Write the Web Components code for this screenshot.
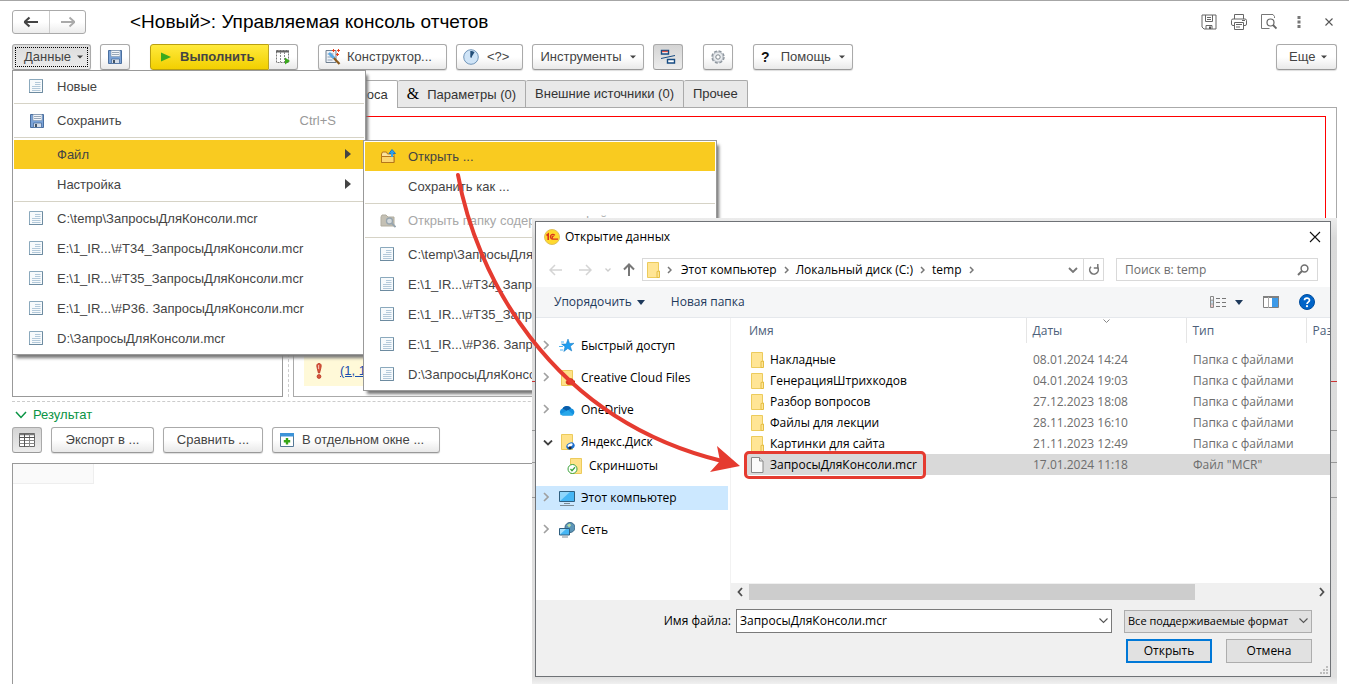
<!DOCTYPE html>
<html lang="ru">
<head>
<meta charset="utf-8">
<title>Управляемая консоль отчетов</title>
<style>
  body { margin: 0; background: #fff; font: 13px/16px "Liberation Sans", Arial, sans-serif; color: #444; }
</style>
</head>
<body>
<report-console></report-console>
<script>
const ICONS = {
  back: [16, 16, '<path d="M1 8h14M1.500 8l5-4.500M1.500 8l5 4.500" fill="none" stroke="#444" stroke-width="2.200"/>'],
  forward: [16, 16, '<path d="M1 8h14M14.500 8l-5-4.500M14.500 8l-5 4.500" fill="none" stroke="#aaa" stroke-width="1.800"/>'],
  save: [16, 16, '<path d="M1.500 1.500h13v13h-13z" fill="#7ba3d8" stroke="#4a6f9f"/><path d="M4 1.500h9v6H4z" fill="#f3f6fa" stroke="#7f93ab" stroke-width=".6"/><path d="M5 3.500h7M5 5.500h7" stroke="#9aa8b8"/><path d="M4.500 10h8v4.500h-8z" fill="#d5deea" stroke="#4a6f9f" stroke-width=".8"/><path d="M6 11h2v3H6z" fill="#456"/>'],
  play: [10, 10, '<path d="M0 0.500L10 5 0 9.500z" fill="#3aaa1d"/>'],
  tableRun: [16, 16, '<path d="M1.500 1.500h12v12h-12z" fill="#fff" stroke="#777" stroke-dasharray="2 1"/><path d="M1 2.500h13" stroke="#666" stroke-width="2"/><path d="M5.500 3v10M9.500 3v10" stroke="#888" stroke-dasharray="2 1"/><path d="M10 8.500l5 3.500-5 3.500z" fill="#3aaa1d"/>'],
  wand: [16, 16, '<path d="M1 1.500h10v12H1z" fill="#eef2f7" stroke="#6f7f90"/><path d="M2.500 5h6M2.500 8h5M2.500 11h5" stroke="#8fa0b4"/><path d="M5 5l9.500 10" stroke="#8a5a1c" stroke-width="2.200"/><path d="M4 4l5 5" stroke="#58a9e8" stroke-width="2.600"/><path d="M7 1.500h3M8.500 0v3M12 1.500h3M13.500 0v3M11 5.500h3M12.500 4v3" stroke="#e8401c"/>'],
  clock: [16, 16, '<circle cx="8" cy="8" r="7.300" fill="#cfe4f7" stroke="#7195b8"/><path d="M8 9V2a6 6 0 0 1 3.500 1.200z" fill="#234e78"/><path d="M8 8.500V2" stroke="#234e78" stroke-width="1.400"/>'],
  blocks: [16, 16, '<path d="M1.500 1.500h7v3.500h-7z" fill="#fff" stroke="#164b82" stroke-width="1.400"/><path d="M2 2.500h6" stroke="#d9534a" stroke-width="1.400"/><path d="M7.500 10.500h7v3.500h-7z" fill="#fff" stroke="#164b82" stroke-width="1.400"/><path d="M1 9.500l14-3" stroke="#164b82"/>'],
  gear: [16, 16, '<circle cx="8" cy="8" r="6" fill="#e3e7eb" stroke="#8d959d" stroke-width="1.400" stroke-dasharray="3 1.700"/><circle cx="8" cy="8" r="5" fill="#e9ecef" stroke="#a3aab1" stroke-width=".8"/><circle cx="8" cy="8" r="2.200" fill="#fff" stroke="#7e868d"/>'],
  caret: [6, 4, '<path d="M0 .5h6L3 3.500z" fill="#444"/>'],
  caretBlue: [8, 5, '<path d="M0 0h8L4 5z" fill="#1e395b"/>'],
  sub: [6, 10, '<path d="M0 0l6 5-6 5z" fill="#444"/>'],
  diskLine: [16, 16, '<path d="M1 1h14v14H3l-2-2z" fill="none" stroke="#666"/><path d="M4.500 1v6.500h7V1M6 3.500h4M6 5.500h4M5 15v-3.500h6V15" fill="none" stroke="#666"/><path d="M8 12.500h2V15H8z" fill="#555"/>'],
  printer: [16, 16, '<path d="M3.500 5V.5h9V5M3.500 11.500H2A1.500 1.500 0 0 1 .5 10V6.500A1.500 1.500 0 0 1 2 5h12a1.500 1.500 0 0 1 1.500 1.500V10a1.500 1.500 0 0 1-1.500 1.500h-1.500M3.500 8.500h9v7h-9zM5 10.500h6M5 13h4" fill="none" stroke="#666"/><path d="M11 6.500h3" stroke="#666"/>'],
  preview: [16, 16, '<path d="M13.500 4V2.500L12 .5H.5v14h8" fill="none" stroke="#777"/><circle cx="9.500" cy="8.500" r="3.500" fill="none" stroke="#666" stroke-width="1.200"/><path d="M12 11l3.500 3.500" stroke="#666" stroke-width="1.800"/>'],
  dots: [4, 12, '<path d="M.5 0h3v3h-3zM.5 4.500h3v3h-3zM.5 9h3v3h-3z" fill="#777"/>'],
  cross: [8, 8, '<path d="M.5.5l7 7M7.500.5l-7 7" stroke="#555" stroke-width="1.100"/>'],
  doc: [14, 15, '<path d="M.5.500h13v13H.5z" fill="#f7fafc" stroke="#8ba9bd"/><path d="M13.500.5v13H0" fill="none" stroke="#6d8ba0"/><path d="M6 3.500h5.500M6 5.500h5.500M3 7.500h8.500M3 9.500h8.500M3 11.500h8.500" stroke="#b3c9da"/>'],
  openFolder: [16, 15, '<path d="M1.500 5l1-2h4l1 2h6.500v8.500h-12.500z" fill="#fbe29a" stroke="#b5761a"/><path d="M1.500 7.500h12.500v6h-12.500z" fill="#fcd670" stroke="#b5761a"/><path d="M12 8V3.500M9 4.500L12 .5l3.500 4z" fill="#32a4ee" stroke="#1a78c0"/><path d="M12 8V4" stroke="#32a4ee" stroke-width="2"/>'],
  findFolder: [16, 15, '<path d="M1 4l1-2h4l2 2h6v9H1z" fill="#c4c0b4" stroke="#b1ad9f"/><circle cx="9.500" cy="8" r="3" fill="#d4d9dc" stroke="#98a5ae" stroke-width="1.300"/><path d="M12 10.500l3.500 3.500" stroke="#98a5ae" stroke-width="1.800"/>'],
  warn: [6, 16, '<path d="M3 .5c2 0 2.600 1.500 2 4L3.600 10H2.400L1 4.500C.4 2 1 .5 3 .5z" fill="#d9573f" stroke="#b83420" stroke-width=".8"/><path d="M2.600 2v4" stroke="#f8c4b8"/><circle cx="3" cy="13.500" r="1.900" fill="#d9573f" stroke="#b83420" stroke-width=".8"/>'],
  expand: [12, 8, '<path d="M1 1l5 5.500L11 1" fill="none" stroke="#0a9444" stroke-width="1.500"/>'],
  grid: [16, 14, '<path d="M.5.500h15v13H.5z" fill="#fff" stroke="#666"/><path d="M0 1.500h16" stroke="#777" stroke-width="1.500"/><path d="M5.500 1v13M10.500 1v13M.5 4.500h15M.5 7.500h15M.5 10.500h15" stroke="#888"/><path d="M5.500 1v13M0 4.500h16" stroke="#555"/>'],
  newWin: [14, 14, '<path d="M.5.500h13v13H.5z" fill="#fff" stroke="#557996"/><path d="M0 0h14v3.500H0z" fill="#3c93d8"/><path d="M5.800 5h2.400v2h2v2.400h-2v2H5.800v-2h-2V7h2z" fill="#36a616"/>'],
  logo: [16, 16, '<circle cx="8" cy="8" r="7.500" fill="#ffd92e" stroke="#dfc05a"/><path d="M2.500 6.500L4.200 5.200V11" fill="none" stroke="#d9341c" stroke-width="1.600"/><path d="M10.800 6.400A2.400 2.400 0 1 0 9 10.200h5M9.600 7.600A.8.800 0 1 0 9 8.800" fill="none" stroke="#d9341c" stroke-width="1.300"/>'],
  close: [12, 12, '<path d="M1 1l10 10M11 1L1 11" stroke="#111" stroke-width="1.100"/>'],
  wBack: [14, 12, '<path d="M1 6h12M6 1L1 6l5 5" fill="none" stroke="#d4d4d4" stroke-width="1.500"/>'],
  wForward: [14, 12, '<path d="M1 6h12M8 1l5 5-5 5" fill="none" stroke="#d4d4d4" stroke-width="1.500"/>'],
  wDown: [6, 4, '<path d="M.5.5L3 3 5.500.5" fill="none" stroke="#ccc" stroke-width="1.300"/>'],
  wUp: [12, 13, '<path d="M6 13V1.500M1 6.500l5-5 5 5" fill="none" stroke="#777" stroke-width="2"/>'],
  chevR: [5, 8, '<path d="M1 1l3 3-3 3" fill="none" stroke="#777" stroke-width="1.500"/>'],
  chevD: [10, 6, '<path d="M1 1l4 4 4-4" fill="none" stroke="#777" stroke-width="1.800"/>'],
  chevThin: [9, 6, '<path d="M.5.5l4 4 4-4" fill="none" stroke="#555" stroke-width="1.100"/>'],
  sortMark: [7, 4, '<path d="M.5.5l3 3 3-3" fill="none" stroke="#888"/>'],
  treeR: [6, 10, '<path d="M1 1l4 4-4 4" fill="none" stroke="#a0a0a0" stroke-width="1.600"/>'],
  treeD: [10, 6, '<path d="M1 .5l4 4 4-4" fill="none" stroke="#404040" stroke-width="1.800"/>'],
  barL: [6, 10, '<path d="M5 1L1.500 5 5 9" fill="none" stroke="#505050" stroke-width="1.800"/>'],
  barR: [6, 10, '<path d="M1 1l3.500 4L1 9" fill="none" stroke="#505050" stroke-width="1.800"/>'],
  refresh: [12, 12, '<path d="M3 2.700A4.300 4.300 0 1 0 9.500 3.300" fill="none" stroke="#777" stroke-width="1.600"/><path d="M9.800 0v4H5.800" stroke="#777" stroke-width="1.500" fill="none"/>'],
  loupe: [12, 12, '<circle cx="7.500" cy="4.500" r="3.400" fill="none" stroke="#707070" stroke-width="1.500"/><path d="M5 7L1 11" stroke="#707070" stroke-width="2"/>'],
  views: [16, 12, '<path d="M.5.5h3v11h-3zM0 4.200h4M0 8h4" fill="none" stroke="#888"/><path d="M1.500 6h1" stroke="#38c"/><path d="M1.500 10h1" stroke="#c33"/><path d="M6 2.500h4M12 2.500h4M6 6.500h4M12 6.500h4M6 10.500h4M12 10.500h4" stroke="#777"/>'],
  pane: [16, 12, '<path d="M.5.500h15v11H.5z" fill="#fff" stroke="#808080"/><path d="M0 1h16" stroke="#808080" stroke-width="2"/><path d="M5.500 1v11" stroke="#aaa"/><path d="M9 2h6v9H9z" fill="#3d9ae8"/>'],
  folder: [13, 16, '<path d="M.5.500h11v15H.5z" fill="#ffe595" stroke="#eccb5c"/><path d="M12.500 9v6.500H10V9.500z" fill="#ffe595" stroke="#e4be45"/>'],
  file: [13, 16, '<path d="M.5.500h8l3.500 3.500v11.500H.5z" fill="#fafafa" stroke="#888"/><path d="M8.500.5V4H12" fill="#ddd" stroke="#888"/>'],
  star: [16, 14, '<path d="M9 0l1.600 4.500 4.400-.2-3.600 3 1.400 4.700-4-2.500-4 3 1.200-4.800L2.500 5h4.700z" fill="#1f9df0" stroke="#1374bd" stroke-width=".5"/><path d="M2 3h3M0 7.500h4M1 11h3" stroke="#4fb3f2"/>'],
  creative: [16, 16, '<path d="M2.500.5h11v15h-11z" fill="#ffe28a" stroke="#eccb5c"/><path d="M8 14a2.200 2.200 0 0 1 1-4 3 3 0 0 1 5.500.5 2 2 0 0 1-.5 4H9z" fill="#e0301e" stroke="#b71d10" stroke-width=".5"/><path d="M9 12c1.500-2 3 2 4.500 0" fill="none" stroke="#fff"/>'],
  cloud: [16, 11, '<path d="M4 10.500A3.600 3.600 0 0 1 3.500 3.500 5 5 0 0 1 12 3.200 4 4 0 0 1 13.500 10.500z" fill="#1490df"/><path d="M3.500 3.500A5 5 0 0 1 12 3.200L8 6z" fill="#0a5ca8"/><path d="M1 9.500L9 5l5.500 4.800-1 .7H4z" fill="#28a8ea"/>'],
  yadisk: [16, 16, '<path d="M2.500.5h11v15h-11z" fill="#ffe28a" stroke="#eccb5c"/><ellipse cx="11.500" cy="12" rx="4.300" ry="3.300" fill="#1b6fd0" transform="rotate(-25 11.500 12)"/><ellipse cx="11" cy="11.200" rx="2.800" ry="1.500" fill="#fff" transform="rotate(-25 11 11)"/><circle cx="11" cy="13.700" r="1.500" fill="#222"/>'],
  shots: [16, 16, '<path d="M3.500.5h11v15h-11z" fill="#ffe28a" stroke="#eccb5c"/><circle cx="5.500" cy="11" r="4.500" fill="#fff" stroke="#3ba33b"/><path d="M3.500 11l1.500 1.700L8 9.300" fill="none" stroke="#3ba33b" stroke-width="1.300"/>'],
  computer: [16, 15, '<path d="M.5.500h15v10H.5z" fill="#45b6f5" stroke="#2f5f80"/><path d="M1 10V1h10z" fill="#8fd6fc"/><path d="M5 12.500h6M1 14.500h14" stroke="#7c8a94"/>'],
  network: [16, 16, '<circle cx="11" cy="5.500" r="5" fill="#5b95b7" stroke="#3d6a87"/><path d="M8 3l3-1.500 1 2-2 2z" fill="#b7dfa7"/><path d="M.5 6.500h10v6.500H.5z" fill="#45b6f5" stroke="#2f5f80"/><path d="M1 12.500v-5.500h6z" fill="#a5e0fd"/><path d="M3 15h6" stroke="#7c8a94"/>'],
  help: [16, 16, '<circle cx="8" cy="8" r="7.500" fill="#0064c8" stroke="#004d9d"/><path d="M5.500 6.300C5.500 3.300 10.500 3.300 10.500 6.200 10.500 8 8 8.200 8 10" fill="none" stroke="#fff" stroke-width="1.700"/><circle cx="8" cy="12.200" r="1.100" fill="#fff"/>'],
  grip: [8, 8, '<path d="M6 0h2v2H6zM3 3h2v2H3zM6 3h2v2H6zM0 6h2v2H0zM3 6h2v2H3zM6 6h2v2H6z" fill="#bdbdbd"/>']
};

class UiIcon extends HTMLElement {
  constructor() { super(); this.attachShadow({ mode: 'open' }); }
  connectedCallback() {
    const [w, h, body] = ICONS[this.getAttribute('name')];
    this.shadowRoot.innerHTML = `<style>:host{display:inline-flex;flex:none}svg{display:block}</style>
      <svg width="${w}" height="${h}" viewBox="0 0 ${w} ${h}" aria-hidden="true">${body}</svg>`;
  }
}
customElements.define('ui-icon', UiIcon);

function define(name, html) {
  const t = document.createElement('template');
  t.innerHTML = html;
  customElements.define(name, class extends HTMLElement {
    constructor() {
      super();
      this.attachShadow({ mode: 'open' }).append(t.content.cloneNode(true));
    }
  });
}

define('tool-button', `
<style>
  :host { display: block; flex: none; }
  button { display: flex; align-items: center; justify-content: center; gap: var(--gap, 8px); box-sizing: border-box;
    width: 100%; height: 26px; padding: 0 var(--pad, 12px); border: 1px solid #aaa; border-bottom-color: #999; border-radius: 3px;
    background: linear-gradient(#fff 50%, #e9e9e9); box-shadow: 0 1px 1px #ddd; font: inherit; color: #444; white-space: nowrap; }
  :host([start]) button { justify-content: flex-start; }
  :host([square]) button { width: 30px; padding: 0; }
  :host([pressed]) button { background: linear-gradient(#d4d4d4, #ececec); box-shadow: none; }
  :host([focused]) button { background: linear-gradient(#dcdcdc, #ececec); outline: 1px dotted #000; outline-offset: -4px; }
  :host([primary]) button { background: linear-gradient(#ffea3c, #f2cf00); border-color: #b99f10; border-radius: 3px 0 0 3px; font-weight: bold; }
  :host([joined]) button { width: 29px; border-left: 0; border-radius: 0 3px 3px 0; }
</style>
<button type="button"><slot></slot></button>`);

define('menu-item', `
<style>
  :host { display: block; position: relative; }
  button { display: grid; grid-template-columns: 28px 1fr auto; align-items: center; width: 100%; height: 30px; box-sizing: border-box;
    padding: 0 13px 0 15px; border: 0; border-top: 1px solid transparent; background: none; font: inherit; color: #444; text-align: left; white-space: nowrap; }
  :host([active]) button { background: #f9cb20; background-clip: padding-box; }
  :host([disabled]) button { color: #a8a8a8; }
  :host([hint]) button { padding-right: 28px; }
  .end { color: #999; }
</style>
<button type="button" role="menuitem"><slot name="icon"><span></span></slot><slot></slot><span class="end"><slot name="end"></slot></span></button>
<slot name="submenu"></slot>`);

define('popup-menu', `
<style>
  :host { display: block; position: absolute; z-index: 2; width: 350px; padding: 0 1px 1px; border: 1px solid #999;
    background: #fff; box-shadow: 3px 4px 3px -1px #777; }
  ::slotted(hr) { margin: 2px 0 1px; border: 0; border-top: 1px solid #d6d3c6; }
</style>
<div role="menu"><slot></slot></div>`);

define('console-header', `
<style>
  :host { display: flex; align-items: center; height: 24px; }
  .nav { display: flex; border: 1px solid #aaa; border-radius: 3px; background: linear-gradient(#fff 50%, #ececec); }
  button { display: flex; align-items: center; justify-content: center; width: 36px; height: 22px; padding: 0; border: 0; background: none; }
  .nav button + button { border-left: 1px solid #ccc; }
  h1 { flex: 1; margin: 0 0 0 44px; font: 19px/24px "Liberation Sans", Arial, sans-serif; color: #000; }
  .tools { display: flex; margin-right: -7px; }
  .tools button { width: 30px; }
</style>
<div class="nav"><button aria-label="Назад"><ui-icon name="back"></ui-icon></button><button aria-label="Вперед"><ui-icon name="forward"></ui-icon></button></div>
<h1>&lt;Новый&gt;: Управляемая консоль отчетов</h1>
<div class="tools">
  <button aria-label="Сохранить"><ui-icon name="diskLine"></ui-icon></button>
  <button aria-label="Печать"><ui-icon name="printer"></ui-icon></button>
  <button aria-label="Просмотр"><ui-icon name="preview"></ui-icon></button>
  <button aria-label="Меню"><ui-icon name="dots"></ui-icon></button>
  <button aria-label="Закрыть"><ui-icon name="cross"></ui-icon></button>
</div>`);

const recent = [['C:\\temp\\ЗапросыДляКонсоли.mcr'], ['E:\\1_IR...\\#T34_ЗапросыДляКонсоли.mcr'], ['E:\\1_IR...\\#T35_ЗапросыДляКонсоли.mcr'],
  ['E:\\1_IR...\\#P36. ЗапросыДляКонсоли.mcr'], ['D:\\ЗапросыДляКонсоли.mcr']]
  .map(([n]) => `<menu-item><ui-icon slot="icon" name="doc"></ui-icon>${n}</menu-item>`).join('');

define('console-toolbar', `
<style>
  :host { display: flex; gap: 9px; }
  .menu { position: relative; }
  .group { display: flex; }
  .gap { margin-left: 11px; }
  .more { margin-left: auto; }
  .main { top: 26px; left: 0; }
  .sub { top: 1px; left: 349px; }
  b { margin-right: 3px; font-size: 14px; color: #111; }
  .w79 { width: 79px; } .w119 { width: 119px; } .w129 { width: 129px; } .w67 { width: 67px; }
  .w112 { width: 112px; } .w100 { width: 100px; } .w61 { width: 61px; }
</style>
<div class="menu">
  <tool-button class="w79" start focused style="--gap:6px;--pad:11px">Данные<ui-icon name="caret"></ui-icon></tool-button>
  <popup-menu class="main">
    <menu-item><ui-icon slot="icon" name="doc"></ui-icon>Новые</menu-item>
    <hr>
    <menu-item hint><ui-icon slot="icon" name="save"></ui-icon>Сохранить<span slot="end">Ctrl+S</span></menu-item>
    <hr>
    <menu-item active>Файл<ui-icon slot="end" name="sub"></ui-icon>
      <popup-menu class="sub" slot="submenu">
        <menu-item active><ui-icon slot="icon" name="openFolder"></ui-icon>Открыть ...</menu-item>
        <menu-item>Сохранить как ...</menu-item>
        <hr>
        <menu-item disabled><ui-icon slot="icon" name="findFolder"></ui-icon>Открыть папку содержащую файл</menu-item>
        <hr>
        ${recent}
      </popup-menu>
    </menu-item>
    <menu-item>Настройка<ui-icon slot="end" name="sub"></ui-icon></menu-item>
    <hr>
    ${recent}
  </popup-menu>
</div>
<tool-button square><ui-icon name="save"></ui-icon></tool-button>
<div class="group gap">
  <tool-button class="w119" start primary style="--gap:9px;--pad:10px"><ui-icon name="play"></ui-icon>Выполнить</tool-button>
  <tool-button joined square><ui-icon name="tableRun"></ui-icon></tool-button>
</div>
<tool-button class="w129 gap" start style="--pad:6px;--gap:6px"><ui-icon name="wand"></ui-icon>Конструктор...</tool-button>
<tool-button class="w67" start style="--pad:6px"><ui-icon name="clock"></ui-icon>&lt;?&gt;</tool-button>
<tool-button class="w112">Инструменты<ui-icon name="caret"></ui-icon></tool-button>
<tool-button square pressed><ui-icon name="blocks"></ui-icon></tool-button>
<tool-button class="gap" square><ui-icon name="gear"></ui-icon></tool-button>
<tool-button class="w100 gap" style="--pad:6px"><b>?</b>Помощь<ui-icon name="caret"></ui-icon></tool-button>
<tool-button class="w61 more" start style="--pad:12px;--gap:6px">Еще<ui-icon name="caret"></ui-icon></tool-button>`);

define('query-area', `
<style>
  :host { display: grid; grid-template-columns: 271px 10px 1fr; border-bottom: 1px dashed #ccc; padding-bottom: 4px; }
  .list { border: 1px solid #999; }
  .split { margin: 0 auto; border-left: 1px dashed #ccc; }
  .tabs { display: flex; }
  .tabs button { height: 27px; padding: 0 9px; border: 1px solid #aaa; border-width: 1px 1px 0 0; border-radius: 2px 2px 0 0;
    background: #e9e9e9; font: inherit; color: #333; white-space: nowrap; }
  .tabs button:first-child { border-left-width: 1px; background: #fff; margin-bottom: -1px; height: 28px; }
  .tabs b { font: 16px/16px "Liberation Serif", serif; color: #000; margin-right: 8px; }
  .panel { border: 1px solid #aaa; padding: 8px 10px 10px; }
  .editor { height: 230px; border: 1px solid #f00; }
  .error { display: flex; align-items: center; gap: 18px; margin-top: 7px; height: 31px; padding-left: 12px; background: #fff9d8; }
  a { color: #1a4fae; }
</style>
<div class="list"></div>
<div class="split"></div>
<div>
  <div class="tabs" role="tablist">
    <button role="tab">Текст запроса</button><button role="tab"><b>&amp;</b>Параметры (0)</button><button role="tab">Внешние источники (0)</button><button role="tab">Прочее</button>
  </div>
  <div class="panel">
    <div class="editor"></div>
    <div class="error"><ui-icon name="warn"></ui-icon><a href="#line">(1, 1)</a></div>
  </div>
</div>`);

define('result-area', `
<style>
  :host { display: flex; flex-direction: column; flex: 1; }
  h2 { display: flex; align-items: center; gap: 6px; height: 25px; margin: 0; padding-left: 3px; font: inherit; color: #0a9444; }
  .bar { display: flex; gap: 9px; margin-bottom: 10px; }
  .sheet { flex: 1; border: 1px solid #999; border-bottom: 0; }
  .cell { width: 80px; height: 19px; background: #fafafa; border: 1px solid #eee; border-width: 0 1px 1px 0; }
  .w103 { width: 103px; } .w100 { width: 100px; } .w168 { width: 168px; }
</style>
<h2><ui-icon name="expand"></ui-icon>Результат</h2>
<div class="bar">
  <tool-button square pressed><ui-icon name="grid"></ui-icon></tool-button>
  <tool-button class="w103">Экспорт в ...</tool-button>
  <tool-button class="w100">Сравнить ...</tool-button>
  <tool-button class="w168" start style="--pad:7px"><ui-icon name="newWin"></ui-icon>В отдельном окне ...</tool-button>
</div>
<div class="sheet"><div class="cell"></div></div>`);

define('tree-item', `
<style>
  :host { display: block; }
  a { display: grid; grid-template-columns: 16px 22px 1fr; align-items: center; height: 24px; padding-left: 7px; color: #000; text-decoration: none; white-space: nowrap; }
  :host([selected]) a { background: #cce8ff; }
  :host([child]) a { padding-left: 15px; }
</style>
<a href="#open"><span><slot name="arrow"></slot></span><slot name="icon"></slot><slot></slot></a>`);

const rows = [['Накладные', '08.01.2024 14:24'], ['ГенерацияШтрихкодов', '04.01.2024 19:03'], ['Разбор вопросов', '27.12.2023 18:08'],
  ['Файлы для лекции', '28.11.2023 16:10'], ['Картинки для сайта', '21.11.2023 12:49']]
  .map(([n, d]) => `<tr><td><span class="name"><ui-icon name="folder"></ui-icon>${n}</span></td><td>${d}</td><td>Папка с файлами</td><td></td></tr>`).join('');

define('file-list', `
<style>
  :host { display: flex; flex-direction: column; min-width: 0; border-left: 1px solid #f2f2f2; }
  .scroll { flex: 1; overflow: hidden; padding-left: 14px; }
  table { width: 100%; table-layout: fixed; border-collapse: collapse; }
  .date { width: 160px; } .type { width: 120px; } .size { width: 24px; }
  th { position: relative; height: 25px; padding: 0 6px; border-left: 1px solid #e5e5e5; font-weight: normal; text-align: left; color: #4c607a; white-space: nowrap; overflow: hidden; }
  th:first-child { border: 0; padding-left: 4px; }
  th ui-icon { position: absolute; top: 1px; left: 76px; }
  thead::after { content: ""; display: block; height: 6px; }
  td { height: 21px; padding: 0 7px; color: #6d6d6d; white-space: nowrap; }
  td:first-child { padding-left: 6px; color: #000; }
  .name { position: relative; display: inline-flex; align-items: center; gap: 6px; height: 21px; vertical-align: top; }
  .chosen td { background: #d9d9d9; }
  .chosen .name::after { content: ""; position: absolute; inset: -3px -9px -4px -7px; border: 3px solid #e53b30; border-radius: 5px; }
  .bar { display: grid; grid-template-columns: 18px 1fr 17px; align-items: center; justify-items: center; height: 17px; background: #f0f0f0; }
  .thumb { justify-self: start; width: 79%; height: 16px; background: #cdcdcd; }
</style>
<div class="scroll">
  <table>
    <colgroup><col><col class="date"><col class="type"><col class="size"></colgroup>
    <thead><tr><th>Имя</th><th>Даты<ui-icon name="sortMark"></ui-icon></th><th>Тип</th><th>Размер</th></tr></thead>
    <tbody>${rows}
      <tr class="chosen"><td><span class="name"><ui-icon name="file"></ui-icon>ЗапросыДляКонсоли.mcr</span></td><td>17.01.2024 11:18</td><td>Файл "MCR"</td><td></td></tr>
    </tbody>
  </table>
</div>
<div class="bar"><ui-icon name="barL"></ui-icon><div class="thumb"></div><ui-icon name="barR"></ui-icon></div>`);

define('open-dialog', `
<style>
  :host { display: flex; box-sizing: border-box; padding: 3px 6px 7px 3px;
    background: linear-gradient(#c33, #c33) 0 163px / 100% 1px no-repeat, linear-gradient(#999, #999) 0 212px / 100% 1px no-repeat,
      linear-gradient(#999, #999) 0 244px / 100% 1px no-repeat, linear-gradient(#999, #999) 0 279px / 100% 1px no-repeat,
      linear-gradient(#ececec, #dadada 20px, #e0e0e0 calc(100% - 7px), #f0f0f0);
    font: 12px/16px "Open Sans", "Noto Sans", sans-serif; color: #000; }
  .win { flex: 1; display: flex; flex-direction: column; min-width: 0; border: 1px solid #6f7276; background: #fff; }
  button, input, select { font: inherit; color: inherit; }
  button { display: flex; align-items: center; justify-content: center; padding: 0; border: 0; background: none; white-space: nowrap; }
  .title { display: flex; align-items: center; gap: 5px; height: 30px; padding: 0 9px 0 8px; }
  .title span { flex: 1; }
  .nav { display: flex; align-items: center; height: 35px; padding: 0 12px 0 6px; }
  .b28 { width: 28px; } .b30 { width: 30px; } .b16 { width: 16px; } .b26 { width: 26px; }
  .path { display: flex; align-items: center; flex: 1; box-sizing: border-box; height: 23px; border: 1px solid #d9d9d9; padding-left: 4px; }
  .path .chev { width: 19px; }
  .path .root { margin-right: 2px; }
  .path .down { width: 20px; margin-left: auto; }
  .path .refresh { width: 20px; height: 21px; border-left: 1px solid #d9d9d9; }
  .search { display: flex; align-items: center; box-sizing: border-box; width: 202px; height: 23px; margin-left: 12px; padding: 0 8px; border: 1px solid #d9d9d9; }
  .search input { flex: 1; min-width: 0; padding: 0; border: 0; outline: 0; background: none; }
  .search input::placeholder { color: #6d6d6d; opacity: 1; }
  .tools { display: flex; align-items: center; height: 30px; padding: 0 15px 0 18px; border-bottom: 1px solid #e5e8ec; background: #f5f6f7; color: #1e395b; }
  .tools button { gap: 5px; }
  .tools .new { margin-left: 26px; }
  .tools .view { margin-left: auto; gap: 9px; }
  .tools .pane, .tools .help { margin-left: 20px; }
  .body { flex: 1; display: grid; grid-template-columns: 194px 1fr; min-height: 0; }
  .tree { display: flex; flex-direction: column; gap: 8px; padding: 16px 2px 0 0; }
  .foot { display: grid; gap: 6px; padding: 9px 18px 13px 0; background: #f0f0f0; position: relative; }
  .line { display: flex; align-items: center; height: 24px; }
  .line label { width: 195px; margin-right: 5px; text-align: right; }
  .combo { position: relative; display: flex; align-items: center; flex: 1; box-sizing: border-box; height: 24px; border: 1px solid #7a7a7a; background: #fff; padding: 0 3px; }
  .combo input { flex: 1; min-width: 0; border: 0; padding: 0; outline: 0; background: none; }
  .type { flex: none; width: 188px; height: 23px; margin-left: 12px; border-color: #adadad; background: #e1e1e1; }
  .type select { flex: 1; min-width: 0; height: 21px; appearance: none; border: 0; padding: 0; background: none; font-size: 11px; }
  .acts { justify-content: flex-end; gap: 14px; }
  .acts button { width: 86px; height: 24px; box-sizing: border-box; border: 1px solid #adadad; background: #e1e1e1; }
  .acts .ok { border: 2px solid #0078d7; }
  .grip { position: absolute; right: 2px; bottom: 2px; }
</style>
<div class="win" role="dialog" aria-label="Открытие данных">
  <div class="title"><ui-icon name="logo"></ui-icon><span>Открытие данных</span><button aria-label="Закрыть"><ui-icon name="close"></ui-icon></button></div>
  <div class="nav">
    <button class="b28" aria-label="Назад"><ui-icon name="wBack"></ui-icon></button>
    <button class="b30" aria-label="Вперед"><ui-icon name="wForward"></ui-icon></button>
    <button class="b16" aria-label="Недавние"><ui-icon name="wDown"></ui-icon></button>
    <button class="b26" aria-label="Вверх"><ui-icon name="wUp"></ui-icon></button>
    <div class="path">
      <ui-icon name="folder"></ui-icon><button class="chev root" aria-label="Корень"><ui-icon name="chevR"></ui-icon></button>
      <button>Этот компьютер</button><button class="chev" aria-label="Папки компьютера"><ui-icon name="chevR"></ui-icon></button>
      <button>Локальный диск (C:)</button><button class="chev" aria-label="Папки диска"><ui-icon name="chevR"></ui-icon></button>
      <button>temp</button><button class="chev" aria-label="Папки temp"><ui-icon name="chevR"></ui-icon></button>
      <button class="down" aria-label="История"><ui-icon name="chevD"></ui-icon></button>
      <button class="refresh" aria-label="Обновить"><ui-icon name="refresh"></ui-icon></button>
    </div>
    <div class="search"><input type="search" aria-label="Поиск" placeholder="Поиск в: temp"><ui-icon name="loupe"></ui-icon></div>
  </div>
  <div class="tools">
    <button>Упорядочить<ui-icon name="caretBlue"></ui-icon></button>
    <button class="new">Новая папка</button>
    <button class="view" aria-label="Вид"><ui-icon name="views"></ui-icon><ui-icon name="caretBlue"></ui-icon></button>
    <button class="pane" aria-label="Область просмотра"><ui-icon name="pane"></ui-icon></button>
    <button class="help" aria-label="Справка"><ui-icon name="help"></ui-icon></button>
  </div>
  <div class="body">
    <div class="tree">
      <tree-item><ui-icon slot="arrow" name="treeR"></ui-icon><ui-icon slot="icon" name="star"></ui-icon>Быстрый доступ</tree-item>
      <tree-item><ui-icon slot="arrow" name="treeR"></ui-icon><ui-icon slot="icon" name="creative"></ui-icon>Creative Cloud Files</tree-item>
      <tree-item><ui-icon slot="arrow" name="treeR"></ui-icon><ui-icon slot="icon" name="cloud"></ui-icon>OneDrive</tree-item>
      <div>
        <tree-item><ui-icon slot="arrow" name="treeD"></ui-icon><ui-icon slot="icon" name="yadisk"></ui-icon>Яндекс.Диск</tree-item>
        <tree-item child><ui-icon slot="icon" name="shots"></ui-icon>Скриншоты</tree-item>
      </div>
      <tree-item selected><ui-icon slot="arrow" name="treeR"></ui-icon><ui-icon slot="icon" name="computer"></ui-icon>Этот компьютер</tree-item>
      <tree-item><ui-icon slot="arrow" name="treeR"></ui-icon><ui-icon slot="icon" name="network"></ui-icon>Сеть</tree-item>
    </div>
    <file-list></file-list>
  </div>
  <div class="foot">
    <div class="line">
      <label for="fname">Имя файла:</label>
      <div class="combo"><input id="fname" type="text" value="ЗапросыДляКонсоли.mcr"><ui-icon name="chevThin"></ui-icon></div>
      <div class="combo type"><select aria-label="Тип файлов"><option>Все поддерживаемые формат</option></select><ui-icon name="chevThin"></ui-icon></div>
    </div>
    <div class="line acts"><button class="ok">Открыть</button><button>Отмена</button></div>
    <ui-icon class="grip" name="grip"></ui-icon>
  </div>
</div>`);

define('report-console', `
<style>
  :host { display: flex; flex-direction: column; position: relative; box-sizing: border-box; min-height: 100vh; padding: 9px 12px 0; border-top: 1px solid #a6a6a6; overflow: hidden; }
  console-toolbar { margin: 10px 0; }
  open-dialog { position: absolute; z-index: 3; top: 217px; left: 532px; right: 12px; bottom: 0; }
  .arrow { position: absolute; z-index: 4; top: -1px; left: 0; pointer-events: none; }
</style>
<console-header></console-header>
<console-toolbar></console-toolbar>
<query-area></query-area>
<result-area></result-area>
<open-dialog></open-dialog>
<svg class="arrow" width="760" height="500" viewBox="0 0 760 500" aria-hidden="true">
  <path d="M458 175C475 270 546 418 722 461" fill="none" stroke="#e53b30" stroke-width="4" stroke-linecap="round"/>
  <path d="M740 466L717 446 720 461 710 472z" fill="#e53b30"/>
</svg>`);
</script>
</body>
</html>
